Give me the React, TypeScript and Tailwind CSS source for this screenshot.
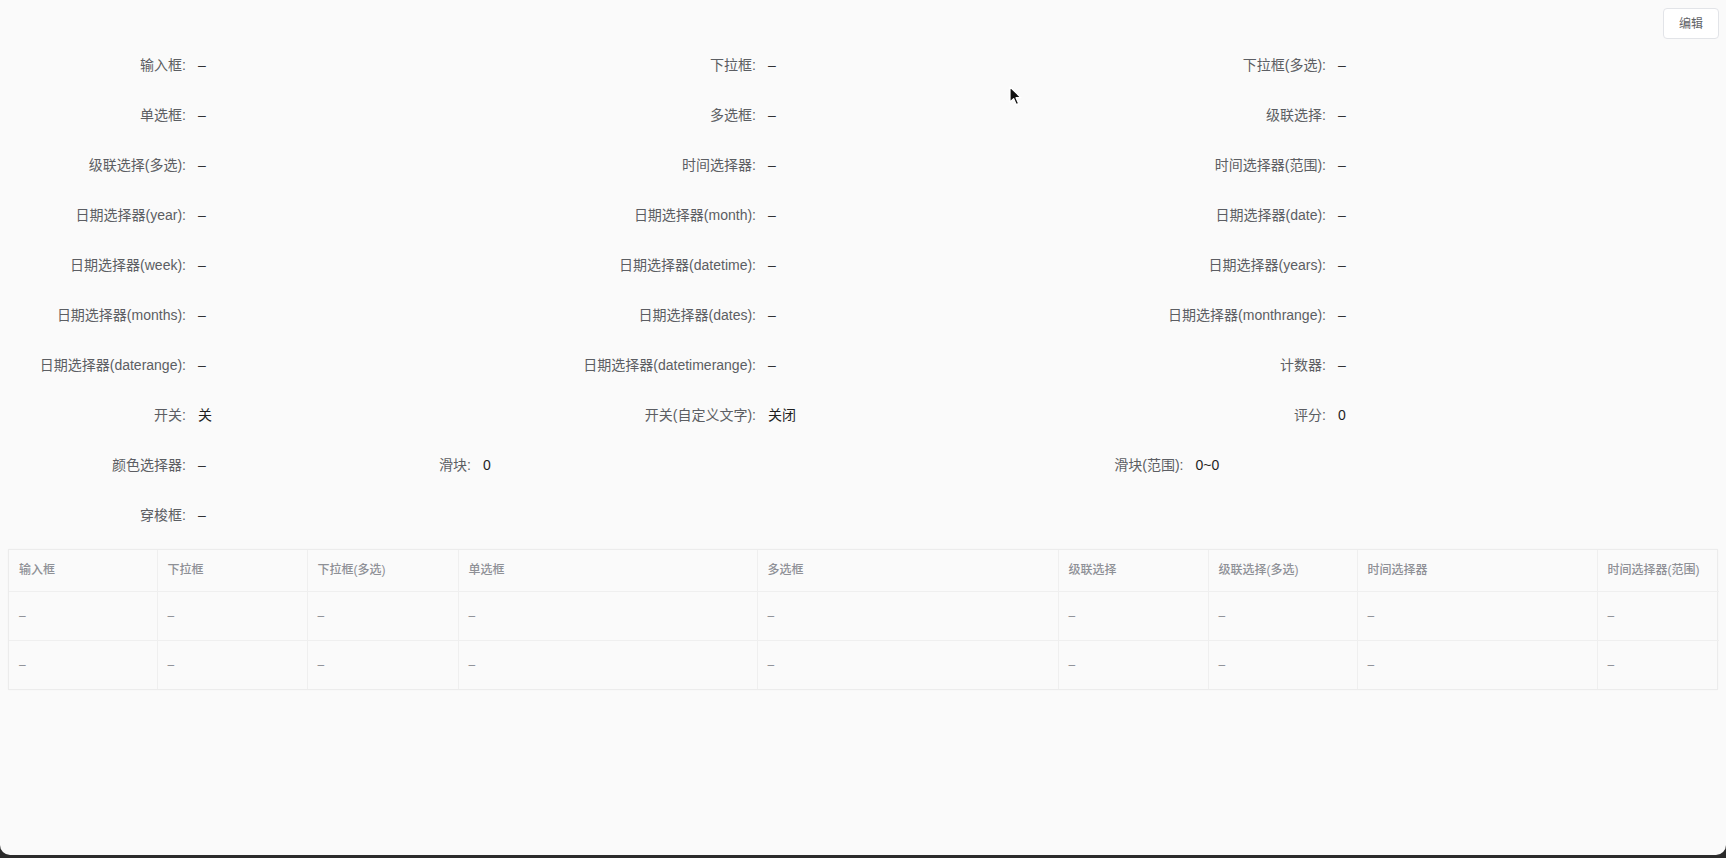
import React from 'react';

type Field = {
  label: string;
  value: string;
  span: string;
  strong?: boolean;
};

// Form items, laid out on a 24-column grid
const fields: Field[] = [
  { label: '输入框', value: '–', span: 'col-span-8' },
  { label: '下拉框', value: '–', span: 'col-span-8' },
  { label: '下拉框(多选)', value: '–', span: 'col-span-8' },
  { label: '单选框', value: '–', span: 'col-span-8' },
  { label: '多选框', value: '–', span: 'col-span-8' },
  { label: '级联选择', value: '–', span: 'col-span-8' },
  { label: '级联选择(多选)', value: '–', span: 'col-span-8' },
  { label: '时间选择器', value: '–', span: 'col-span-8' },
  { label: '时间选择器(范围)', value: '–', span: 'col-span-8' },
  { label: '日期选择器(year)', value: '–', span: 'col-span-8' },
  { label: '日期选择器(month)', value: '–', span: 'col-span-8' },
  { label: '日期选择器(date)', value: '–', span: 'col-span-8' },
  { label: '日期选择器(week)', value: '–', span: 'col-span-8' },
  { label: '日期选择器(datetime)', value: '–', span: 'col-span-8' },
  { label: '日期选择器(years)', value: '–', span: 'col-span-8' },
  { label: '日期选择器(months)', value: '–', span: 'col-span-8' },
  { label: '日期选择器(dates)', value: '–', span: 'col-span-8' },
  { label: '日期选择器(monthrange)', value: '–', span: 'col-span-8' },
  { label: '日期选择器(daterange)', value: '–', span: 'col-span-8' },
  { label: '日期选择器(datetimerange)', value: '–', span: 'col-span-8' },
  { label: '计数器', value: '–', span: 'col-span-8' },
  { label: '开关', value: '关', span: 'col-span-8', strong: true },
  { label: '开关(自定义文字)', value: '关闭', span: 'col-span-8', strong: true },
  { label: '评分', value: '0', span: 'col-span-8', strong: true },
  { label: '颜色选择器', value: '–', span: 'col-span-4' },
  { label: '滑块', value: '0', span: 'col-span-10', strong: true },
  { label: '滑块(范围)', value: '0~0', span: 'col-span-10', strong: true },
  { label: '穿梭框', value: '–', span: 'col-span-8' },
];

const columns: { title: string; width: number }[] = [
  { title: '输入框', width: 148 },
  { title: '下拉框', width: 150 },
  { title: '下拉框(多选)', width: 151 },
  { title: '单选框', width: 299 },
  { title: '多选框', width: 301 },
  { title: '级联选择', width: 150 },
  { title: '级联选择(多选)', width: 149 },
  { title: '时间选择器', width: 240 },
  { title: '时间选择器(范围)', width: 122 },
];

const rows = [0, 1];

const FormItem: React.FC<{ field: Field }> = ({ field }) => (
  <div className={`${field.span} flex h-8 mb-[18px] text-sm leading-8`}>
    <label className="w-[190px] shrink-0 pr-3 text-right text-[#5c5e63] whitespace-nowrap">
      {field.label}:
    </label>
    <div className={field.strong ? 'text-[#1f1f1f]' : 'text-[#303133]'}>{field.value}</div>
  </div>
);

const Cursor = () => (
  <svg className="absolute left-[1009px] top-[86px] w-[13px] h-[20px]" viewBox="0 0 13 20">
    <path d="M1 1 L1 16 L4.6 12.6 L7.2 18.6 L9.6 17.6 L7 11.7 L12 11.7 Z" fill="#111" stroke="#fff" strokeWidth="1.2" strokeLinejoin="round" />
  </svg>
);

export default function App() {
  return (
    <div
      className="relative h-[858px] w-full bg-[#2b2b2b] overflow-hidden"
      style={{ fontFamily: '"Liberation Sans", "Noto Sans CJK SC", sans-serif' }}
    >
      <div className="h-[855px] bg-[#fafafa] rounded-b-[10px] px-2">
        {/* Toolbar */}
        <div className="flex justify-end pt-[8px]">
          <button className="h-[31px] px-[15px] text-xs text-[#606266] bg-white border border-[#e2e4e8] rounded-[4px] -mr-px">
            编辑
          </button>
        </div>

        {/* Read-only form */}
        <div className="grid grid-cols-[repeat(24,minmax(0,1fr))] mt-[10px]">
          {fields.map((f) => (
            <FormItem key={f.label} field={f} />
          ))}
        </div>

        {/* Table */}
        <div className="border border-[#ececec] shadow-[0_0_2px_rgba(0,0,0,0.03)]">
          <table className="table-fixed border-collapse w-full text-xs">
            <colgroup>
              {columns.map((c) => (
                <col key={c.title} style={{ width: c.width }} />
              ))}
            </colgroup>
            <thead>
              <tr className="h-[41px]">
                {columns.map((c, i) => (
                  <th
                    key={c.title}
                    className={`px-[10px] text-left font-medium text-[#8e9096] whitespace-nowrap border-b border-[#efefef] ${i > 0 ? 'border-l border-l-[#efefef]' : ''}`}
                  >
                    {c.title}
                  </th>
                ))}
              </tr>
            </thead>
            <tbody>
              {rows.map((r) => (
                <tr key={r} className="h-[49px]">
                  {columns.map((c, i) => (
                    <td
                      key={c.title}
                      className={`px-[10px] text-[#8a8d93] ${r === 0 ? 'border-b border-[#efefef]' : ''} ${i > 0 ? 'border-l border-l-[#efefef]' : ''}`}
                    >
                      –
                    </td>
                  ))}
                </tr>
              ))}
            </tbody>
          </table>
        </div>
      </div>
      <Cursor />
    </div>
  );
}
